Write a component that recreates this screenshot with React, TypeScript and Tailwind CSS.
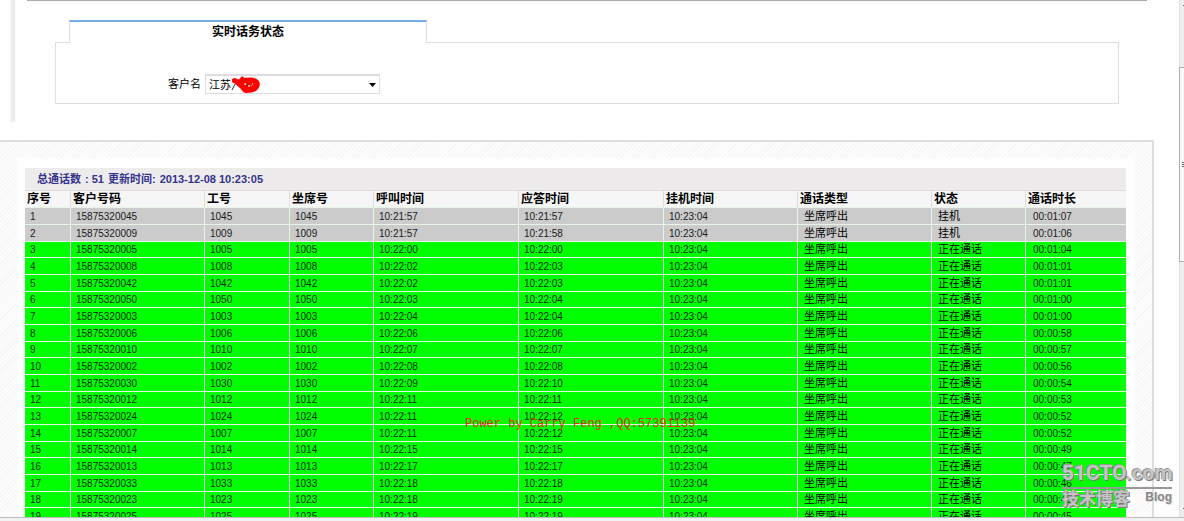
type Call = {
  phone: string;
  agent: string;
  start: string;
  answer: string;
  duration: string;
  ended?: boolean;
};

const hangupTime = "10:23:04";

const calls: Call[] = [
  { phone: "15875320045", agent: "1045", start: "10:21:57", answer: "10:21:57", duration: "00:01:07", ended: true },
  { phone: "15875320009", agent: "1009", start: "10:21:57", answer: "10:21:58", duration: "00:01:06", ended: true },
  { phone: "15875320005", agent: "1005", start: "10:22:00", answer: "10:22:00", duration: "00:01:04" },
  { phone: "15875320008", agent: "1008", start: "10:22:02", answer: "10:22:03", duration: "00:01:01" },
  { phone: "15875320042", agent: "1042", start: "10:22:02", answer: "10:22:03", duration: "00:01:01" },
  { phone: "15875320050", agent: "1050", start: "10:22:03", answer: "10:22:04", duration: "00:01:00" },
  { phone: "15875320003", agent: "1003", start: "10:22:04", answer: "10:22:04", duration: "00:01:00" },
  { phone: "15875320006", agent: "1006", start: "10:22:06", answer: "10:22:06", duration: "00:00:58" },
  { phone: "15875320010", agent: "1010", start: "10:22:07", answer: "10:22:07", duration: "00:00:57" },
  { phone: "15875320002", agent: "1002", start: "10:22:08", answer: "10:22:08", duration: "00:00:56" },
  { phone: "15875320030", agent: "1030", start: "10:22:09", answer: "10:22:10", duration: "00:00:54" },
  { phone: "15875320012", agent: "1012", start: "10:22:11", answer: "10:22:11", duration: "00:00:53" },
  { phone: "15875320024", agent: "1024", start: "10:22:11", answer: "10:22:12", duration: "00:00:52" },
  { phone: "15875320007", agent: "1007", start: "10:22:11", answer: "10:22:12", duration: "00:00:52" },
  { phone: "15875320014", agent: "1014", start: "10:22:15", answer: "10:22:15", duration: "00:00:49" },
  { phone: "15875320013", agent: "1013", start: "10:22:17", answer: "10:22:17", duration: "00:00:47" },
  { phone: "15875320033", agent: "1033", start: "10:22:18", answer: "10:22:18", duration: "00:00:46" },
  { phone: "15875320023", agent: "1023", start: "10:22:18", answer: "10:22:19", duration: "00:00:45" },
  { phone: "15875320025", agent: "1025", start: "10:22:19", answer: "10:22:19", duration: "00:00:45" },
];

const columns = [
  { title: "序号", width: "w-[45px]" },
  { title: "客户号码", width: "w-[134px]" },
  { title: "工号", width: "w-[85px]" },
  { title: "坐席号", width: "w-[84px]" },
  { title: "呼叫时间", width: "w-[145px]" },
  { title: "应答时间", width: "w-[145px]" },
  { title: "挂机时间", width: "w-[134px]" },
  { title: "通话类型", width: "w-[134px]" },
  { title: "状态", width: "w-[94px]" },
  { title: "通话时长", width: "w-auto" },
];

function CustomerFilter() {
  return (
    <section className="mr-[60px] ml-[55px]">
      <div className="flex h-[23px]">
        <div className="w-3.5 border-b border-[#dedede]" />
        <h1 className="w-[358px] border-x border-t-2 border-x-[#dedede] border-t-[#76ace0] text-center text-xs leading-5 font-bold">
          实时话务状态
        </h1>
        <div className="flex-1 border-b border-[#dedede]" />
      </div>
      <div className="flex h-[61px] items-center border-x border-b border-[#dedede] pt-[22px] pl-28">
        <label htmlFor="customer" className="w-[37px] text-[11px]">
          客户名
        </label>
        <div className="relative">
          <select
            id="customer"
            className="block h-5 w-[175px] appearance-none border border-t-2 border-[#dcdce0] bg-white pl-[3px] text-[11px] leading-4 outline-none"
          >
            <option>江苏</option>
          </select>
          <svg className="pointer-events-none absolute top-[9px] right-1" width="7" height="4" viewBox="0 0 7 4">
            <path d="M0 0h7L3.5 4z" fill="#000" />
          </svg>
          {/* customer name is blacked out */}
          <svg className="pointer-events-none absolute top-0.5 left-[26px]" width="30" height="18" viewBox="0 0 30 18">
            <path d="M1 14l3-6" stroke="#333" />
            <path
              d="M1 4c0-2 3-3 5-1 2 1 3 0 4-2 1-1 3 0 3 1 5-1 11-1 14 2 3 3 2 7-1 10-3 3-7 3-11 3-3 0-4-3-6-5C6 10 5 8 3 7 1 7 1 6 1 4z"
              fill="#f00"
            />
            <path d="M13 8h2m2 2h2m2-2h1m-7 0v1m5 0v1" stroke="#fff" />
            <path d="M15 9h2m2 0h1" stroke="#333" />
          </svg>
        </div>
      </div>
    </section>
  );
}

function CallTable() {
  return (
    <table className="w-full table-fixed border-separate border-spacing-0">
      <thead>
        <tr>
          {columns.map((col, i) => (
            <th
              key={col.title}
              className={`${col.width} h-[17px] border-t border-[#dddddf] bg-[#f6f6f6] p-0 text-left text-xs leading-4 font-bold whitespace-nowrap ${i ? "border-l pl-0.5" : "pl-0.5"}`}
            >
              {col.title}
            </th>
          ))}
        </tr>
      </thead>
      <tbody className="[&_td]:h-[17px] [&_td]:border-t [&_td]:border-[#e6f5e6] [&_td]:p-0 [&_td]:pl-[5px] [&_td]:text-[10px] [&_td]:leading-[15px] [&_td+td]:border-l [&_tr:nth-child(3n)_td]:h-4">
        {calls.map((call, i) => (
          <tr key={call.phone} className={call.ended ? "bg-[#cbcbcb] text-[#1a1a1a]" : "bg-[#00ff00] text-[#002800]"}>
            <td>{i + 1}</td>
            <td>{call.phone}</td>
            <td>{call.agent}</td>
            <td>{call.agent}</td>
            <td>{call.start}</td>
            <td>{call.answer}</td>
            <td>{hangupTime}</td>
            <td>
              <span className="block pl-px text-[11px] leading-[15px] text-black">坐席呼出</span>
            </td>
            <td>
              <span className="block pl-px text-[11px] leading-[15px] text-black">{call.ended ? "挂机" : "正在通话"}</span>
            </td>
            <td>
              <span className="block pl-0.5">{call.duration}</span>
            </td>
          </tr>
        ))}
      </tbody>
    </table>
  );
}

function Scrollbar() {
  return (
    <div className="flex w-[5px] flex-col border-l border-[#e2e2e4] bg-[#efeeef]">
      <div className="h-[67px] pt-[5px]">
        <div className="ml-auto h-px w-px bg-[#666]" />
      </div>
      <div className="-ml-px flex h-[195px] flex-col items-end justify-center gap-px border-y border-l border-[#aeaeb2] bg-[#f8f8f8]">
        <div className="h-px w-0.5 bg-[#666]" />
        <div className="h-px w-0.5 bg-[#666]" />
        <div className="h-px w-0.5 bg-[#666]" />
      </div>
      <div className="mt-auto mb-2 ml-auto h-px w-px bg-[#666]" />
    </div>
  );
}

function Watermark() {
  return (
    <div className="absolute right-3 bottom-2.5 w-[110px] font-bold text-[#c4c4c4] [text-shadow:1px_1px_0_#777,-1px_-1px_0_#999]">
      <div className="border-b-2 border-[#999] font-[Roboto,'Liberation_Sans',sans-serif] text-[21px] leading-[27px] whitespace-nowrap">
        51CTO.com
      </div>
      <div className="flex items-start justify-between leading-[22px]">
        <span className="text-[17px]">技术博客</span>
        <span className="text-xs leading-4 text-[#888] [text-shadow:1px_1px_0_#ddd]">Blog</span>
      </div>
    </div>
  );
}

export default function App() {
  return (
    <div className="relative flex h-screen flex-col overflow-hidden bg-[#fdfefd] font-['Liberation_Sans','Noto_Sans_CJK_SC',sans-serif] text-black">
      <div className="flex min-h-0 flex-1">
        <main className="flex min-w-0 flex-1 flex-col overflow-hidden">
          <div className="flex h-[140px] shrink-0">
            <div className="ml-2.5 h-[122px] w-[5px] bg-linear-to-r from-[#f6f5f6] to-[#e8e7e8]" />
            <div className="-ml-[15px] min-w-0 flex-1">
              <div className="mr-8 mb-[19px] ml-[27px] h-px bg-[#a8a8a8]" />
              <CustomerFilter />
            </div>
          </div>

          <div className="mr-[25px] flex-1 border-t-2 border-r-2 border-[#dcdedd] bg-[repeating-linear-gradient(135deg,#fdfdfd_0px,#fdfdfd_2px,#f7f5f5_2px,#f7f5f5_3px)] pt-4 pr-[17px] pl-[17px]">
            <div className="bg-[#fdfefd] pt-2.5 pr-[9px] pl-2">
              <div className="flex h-[22px] items-center bg-[#eeebec] pl-3 text-[11px] font-bold text-[#33338c]">
                <span className="mr-1">总通话数</span>
                <span className="mr-1">: 51</span>
                <span>更新时间</span>
                <span className="mr-1">:</span>
                <span>2013-12-08 10:23:05</span>
              </div>
              <CallTable />
            </div>
          </div>
        </main>
        <Scrollbar />
      </div>
      <footer className="h-1 shrink-0 border-t border-[#bdbdbd] bg-[#f3f2f3]" />

      <p className="absolute bottom-[89px] left-[465px] font-['Liberation_Mono',monospace] text-xs leading-4 text-[#e02a00]">
        Power by Carry Feng ,QQ:57391139
      </p>
      <Watermark />
    </div>
  );
}
